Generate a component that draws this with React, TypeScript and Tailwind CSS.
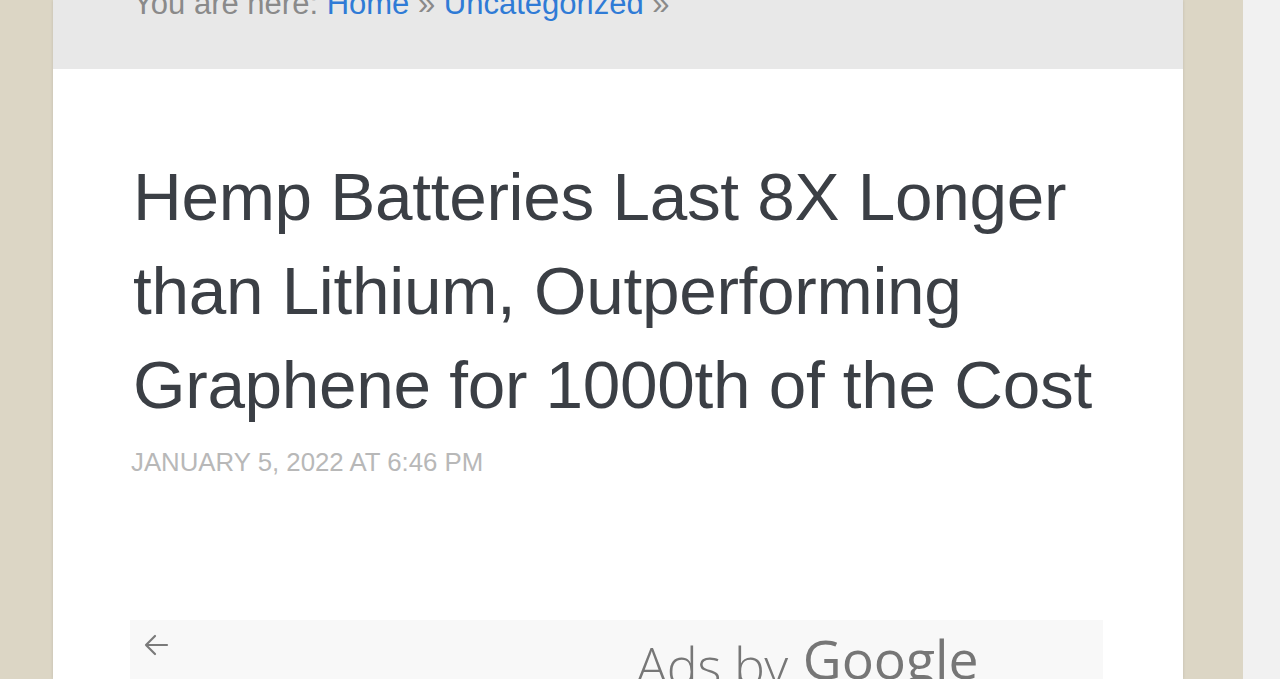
import React from "react";

export default function App() {
  return (
    <div className="w-[1280px] h-[679px] overflow-hidden flex bg-[#f1f1f1]" style={{ fontFamily: '"Liberation Sans", Arial, sans-serif' }}>
      <div className="w-[1243px] h-full shrink-0 bg-[#dcd6c5] pl-[53px] pr-[60px] flex">
        <div className="w-[1130px] h-full shrink-0 bg-white flex flex-col shadow-[0_0_3px_rgba(0,0,0,0.12)]">
          <div className="h-[69px] shrink-0 bg-[#e8e8e8] pl-[80px] flex flex-col">
            <div className="mt-[-14px] text-[31px] leading-[36px] text-[#8a8a8a] whitespace-nowrap">
              You are here: <span className="text-[#2f7bd6]">Home</span> » <span className="text-[#2f7bd6]">Uncategorized</span> »
            </div>
          </div>
          <div className="px-[80px] pt-[81px] flex flex-col shrink-0">
            <h1 className="text-[67.5px] leading-[94px] text-[#3b3f45] tracking-[-0.3px] whitespace-nowrap">
              Hemp Batteries Last 8X Longer
              <br />
              than Lithium, Outperforming
              <br />
              Graphene for 1000th of the Cost
            </h1>
            <div className="mt-[18px] ml-[-2px] text-[25.8px] leading-[25px] text-[#b8b8b8] whitespace-nowrap">
              JANUARY 5, 2022 AT 6:46 PM
            </div>
            <div className="mt-[145px] ml-[-3px] w-[973px] h-[80px] bg-[#f8f8f8] flex items-start">
              <div className="pl-[13px] pt-[13px] w-[70px] shrink-0">
                <svg width="26" height="24" viewBox="0 0 26 24" fill="none" stroke="#7a7a7a" strokeWidth="2.2" strokeLinecap="round" strokeLinejoin="round">
                  <path d="M24 12H3M12 3L3 12L12 21" />
                </svg>
              </div>
              <div className="ml-[436px] mt-[5px] flex items-start whitespace-nowrap text-[#777]" style={{ fontFamily: '"Open Sans", sans-serif' }}>
                <span className="mt-[10px] text-[52px] font-light leading-[60px] tracking-[-0.5px]">Ads by</span>
                <span className="mt-[4px] ml-[15px] text-[53.5px] leading-[60px] text-[#767676]">Google</span>
              </div>
            </div>
          </div>
        </div>
      </div>
    </div>
  );
}
